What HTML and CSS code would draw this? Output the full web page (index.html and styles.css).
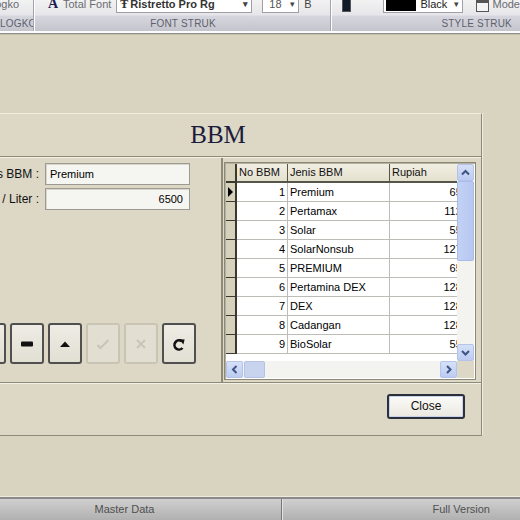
FILE: index.html
```html
<!DOCTYPE html>
<html>
<head>
<meta charset="utf-8">
<link rel="stylesheet" href="styles.css">
</head>
<body>
<div class="screen">
  <div class="ribbon">
    <div class="rgroup g1">
      <div class="rrow"><span class="rtxt">Cetak Logko</span></div>
      <div class="rlabel">LOGKO</div>
    </div>
    <div class="rgroup g2">
      <div class="rrow">
        <span class="ico-a">A</span><span class="rtxt">Total Font</span>
        <span class="combo cfont"><span class="tt">Ŧ</span>Ristretto Pro Rg<span class="carr">▾</span></span>
        <span class="combo csize">18<span class="carr">▾</span></span>
        <span class="rtxt rb">B</span>
      </div>
      <div class="rlabel">FONT STRUK</div>
    </div>
    <div class="rgroup g3">
      <div class="rrow">
        <span class="ico-color"></span>
        <span class="combo ccolor"><span class="swatch"></span>Black<span class="carr">▾</span></span>
        <span class="ico-mode"></span><span class="rtxt">Mode</span>
      </div>
      <div class="rlabel rlabel-right">STYLE STRUK</div>
    </div>
  </div>

  <div class="desk">
    <div class="window">
      <div class="wtitle">BBM</div>
      <div class="wbody">
        <div class="left">
          <div class="field"><span class="lbl">Jenis BBM :</span><div class="input">Premium</div></div>
          <div class="field"><span class="lbl">Harga / Liter :</span><div class="input num">6500</div></div>
          <div class="btns">
            <div class="nbtn"><svg width="12" height="12" viewBox="0 0 12 12"><rect x="1" y="4" width="10" height="4" fill="#111"/><rect x="4" y="1" width="4" height="10" fill="#111"/></svg></div>
            <div class="nbtn"><svg width="14" height="8" viewBox="0 0 14 8"><rect x="1" y="1.5" width="12" height="5" rx="1" fill="#111"/></svg></div>
            <div class="nbtn"><svg width="12" height="8" viewBox="0 0 12 8"><polygon points="1,7 6,1.5 11,7" fill="#111"/></svg></div>
            <div class="nbtn off"><svg width="14" height="12" viewBox="0 0 14 12"><polyline points="1.5,7 4.5,10 12.5,2" fill="none" stroke="#c9c5b5" stroke-width="2"/></svg></div>
            <div class="nbtn off"><svg width="12" height="12" viewBox="0 0 12 12"><path d="M2 2 L10 10 M10 2 L2 10" stroke="#c9c5b5" stroke-width="2"/></svg></div>
            <div class="nbtn"><svg width="14" height="14" viewBox="0 0 14 14"><path d="M10.5 11 A4.6 4.6 0 1 1 9.8 4.2" fill="none" stroke="#111" stroke-width="2.6"/><polygon points="7.2,2.2 12.6,2.4 11.4,7.4" fill="#111"/></svg></div>
          </div>
        </div>
        <div class="grid">
          <div class="gmain">
            <div class="gview">
              <div class="gtable">
                <div class="hc ind"></div><div class="hc">No BBM</div><div class="hc">Jenis BBM</div><div class="hc">Rupiah</div>

                <div class="c ind"><span class="arrow"></span></div><div class="c r">1</div><div class="c">Premium</div><div class="c r">6500</div>
                <div class="c ind"></div><div class="c r">2</div><div class="c">Pertamax</div><div class="c r">11200</div>
                <div class="c ind"></div><div class="c r">3</div><div class="c">Solar</div><div class="c r">5500</div>
                <div class="c ind"></div><div class="c r">4</div><div class="c">SolarNonsub</div><div class="c r">12700</div>
                <div class="c ind"></div><div class="c r">5</div><div class="c">PREMIUM</div><div class="c r">6500</div>
                <div class="c ind"></div><div class="c r">6</div><div class="c">Pertamina DEX</div><div class="c r">12800</div>
                <div class="c ind"></div><div class="c r">7</div><div class="c">DEX</div><div class="c r">12800</div>
                <div class="c ind"></div><div class="c r">8</div><div class="c">Cadangan</div><div class="c r">12800</div>
                <div class="c ind"></div><div class="c r">9</div><div class="c">BioSolar</div><div class="c r">5500</div>
              </div>
            </div>
            <div class="vscroll">
              <div class="sbtn"><svg width="15" height="15" viewBox="0 0 15 15"><polyline points="4,9.5 7.5,6 11,9.5" fill="none" stroke="#3d5584" stroke-width="2"/></svg></div>
              <div class="vthumb"></div>
              <div class="vtrack"></div>
              <div class="sbtn"><svg width="15" height="15" viewBox="0 0 15 15"><polyline points="4,6 7.5,9.5 11,6" fill="none" stroke="#3d5584" stroke-width="2"/></svg></div>
            </div>
          </div>
          <div class="hscroll">
            <div class="sbtn"><svg width="15" height="15" viewBox="0 0 15 15"><polyline points="9.5,4 6,7.5 9.5,11" fill="none" stroke="#3d5584" stroke-width="2"/></svg></div>
            <div class="hthumb"></div>
            <div class="htrack"></div>
            <div class="sbtn"><svg width="15" height="15" viewBox="0 0 15 15"><polyline points="6,4 9.5,7.5 6,11" fill="none" stroke="#3d5584" stroke-width="2"/></svg></div>
            <div class="corner"></div>
          </div>
        </div>
      </div>
      <div class="wfoot">
        <div class="closebtn">Close</div>
      </div>
    </div>
  </div>

  <div class="status">
    <div class="st st1">Master Data</div>
    <div class="st st2">Full Version</div>
  </div>
</div>
</body>
</html>
```

FILE: styles.css
```css
* { box-sizing: border-box; }
html, body { margin: 0; padding: 0; }
body {
  width: 520px;
  height: 520px;
  overflow: hidden;
  font-family: "Liberation Sans", Arial, sans-serif;
  font-size: 11px;
  color: #000;
  background: #d9d4bf;
}
.screen { display: flex; flex-direction: column; height: 520px; }

/* ribbon */
.ribbon {
  flex: none;
  height: 33px;
  display: flex;
  background: linear-gradient(#f2f2f2 0, #e6e6ea 48%, #d6d6de 52%, #c4c4cc 100%);
  border-bottom: 2px solid #fbfbfb;
  overflow: hidden;
}
.rgroup {
  display: flex;
  flex-direction: column;
  justify-content: space-between;
  padding-bottom: 1px;
  border-right: 1px solid #a4a4ac;
  box-shadow: 1px 0 0 #fdfdfd;
  margin-right: 2px;
  overflow: hidden;
}
.g1 { width: 34px; }
.g2 { width: 295px; }
.g3 { flex: 1; border-right: none; box-shadow: none; margin-right: 0; }
.rrow {
  height: 18px;
  margin-top: -5px;
  display: flex;
  align-items: center;
  white-space: nowrap;
}
.g1 .rrow { justify-content: flex-end; padding-right: 14px; }
.g2 .rrow { padding-left: 12px; }
.g3 .rrow { padding-left: 9px; }
.rtxt { color: #6b6b70; font-size: 11px; }
.rlabel {
  height: 13px;
  line-height: 13px;
  font-size: 10px;
  color: #5f5f6e;
  text-align: center;
  letter-spacing: 0.2px;
  white-space: nowrap;
}
.g1 .rlabel { text-align: right; padding-right: 12px; }
.rlabel-right { text-align: right; padding-right: 8px; }
.ico-a { font-family: "Liberation Serif", serif; font-weight: bold; font-size: 14px; color: #1c1c50; width: 12px; margin-right: 3px; }
.combo {
  display: flex;
  align-items: center;
  height: 18px;
  background: #fff;
  border: 1px solid #a0a0a6;
  position: relative;
  padding-left: 3px;
  color: #222;
}
.carr { position: absolute; right: 3px; top: 3px; font-size: 9px; color: #444; }
.cfont { margin-left: 5px; width: 136px; font-weight: bold; color: #333; }
.tt { font-family: "Liberation Serif", serif; font-size: 12px; margin-right: 2px; }
.csize { margin-left: 10px; width: 37px; padding-left: 6px; color: #555; }
.rb { margin-left: 5px; color: #444; }
.ico-color { width: 10px; height: 14px; background: #111a2a; border: 1px solid #555; margin-top: 2px; }
.ccolor { margin-left: 32px; width: 86px; padding-left: 2px; }
.swatch { width: 30px; height: 14px; background: #000; margin-right: 4px; }
.ico-mode { width: 14px; height: 12px; border: 1px solid #555; border-top-width: 3px; background: #f4f4f4; margin-left: 13px; margin-top: 3px; margin-right: 3px; }

/* desktop */
.desk {
  flex: 1;
  overflow: hidden;
  border-top: 1px solid #8f8f8f;
  box-shadow: inset 0 1px 0 #c4bea8;
  background: #d9d4bf;
}
.window {
  margin-top: 79px;
  margin-left: -45px;
  width: 527px;
  height: 322px;
  background: #dcd8c5;
  border-top: 1px solid #f1eee2;
  border-right: 1px solid #8e8a79;
  box-shadow: 1px 0 0 #eeebdf, 0 1px 0 #8e8a79;
  display: flex;
  flex-direction: column;
}
.wtitle {
  height: 43px;
  line-height: 42px;
  text-align: center;
  font-family: "Liberation Serif", "Times New Roman", serif;
  font-size: 25px;
  color: #1c1c3e;
  border-bottom: 1px solid #8e8a78;
  box-shadow: 0 1px 0 #f3f0e5;
}
.wbody {
  height: 225px;
  display: flex;
  border-bottom: 1px solid #8e8a78;
  box-shadow: 0 1px 0 #f3f0e5;
  margin-top: 1px;
}
.left {
  width: 268px;
  border-right: 2px solid #8e8a78;
  padding-top: 5px;
}
.field { display: flex; align-items: center; height: 22px; margin-bottom: 3px; }
.lbl { width: 87px; text-align: right; padding-right: 3px; font-size: 12px; color: #111; white-space: nowrap; }
.input {
  margin-left: 3px;
  width: 145px;
  height: 22px;
  line-height: 20px;
  padding: 0 4px;
  border: 1px solid #9c9a92;
  box-shadow: inset 1px 1px 0 #d8d6cc;
  background: #f5f5f1;
  font-size: 11px;
}
.input.num { text-align: right; padding-right: 6px; }
.btns { display: flex; gap: 4px; margin-top: 113px; padding-left: 17px; }
.nbtn {
  width: 34px;
  height: 41px;
  border: 2px solid #505050;
  border-radius: 3px;
  background: linear-gradient(#eeece4, #e2dfd3);
  display: flex;
  align-items: center;
  justify-content: center;
}
.nbtn.off { border-color: #c9c5b4; background: #e2dfd2; }

/* grid */
.grid {
  margin: 4px 0 0 1px;
  width: 252px;
  height: 218px;
  border: 1px solid #8c8877;
  box-shadow: inset 1px 1px 0 #b5b1a0;
  background: #fff;
  padding: 1px;
  display: flex;
  flex-direction: column;
}
.gmain { display: flex; flex: 1; min-height: 0; }
.gview { width: 231px; overflow: hidden; background: #fff; }
.gtable {
  display: grid;
  grid-template-columns: 11px 51px 102px 87px;
  grid-auto-rows: 19px;
  width: 251px;
}
.hc {
  background: linear-gradient(#f1eee2, #e5e1cf);
  border-right: 1px solid #57544a;
  border-bottom: 2px solid #57544a;
  padding-left: 2px;
  line-height: 17px;
  white-space: nowrap;
  color: #111;
}
.c {
  border-right: 1px solid #bdbdb8;
  border-bottom: 1px solid #bdbdb8;
  line-height: 18px;
  padding: 0 2px;
  white-space: nowrap;
  overflow: hidden;
}
.c.r { text-align: right; }
.ind { background: #d6d1ba; border-right: 2px solid #3b392f; border-bottom: 1px solid #3b392f; padding: 0; display: flex; align-items: center; justify-content: center; }
.hc.ind { border-bottom: 2px solid #3b392f; }
.arrow { width: 0; height: 0; border-left: 5px solid #000; border-top: 5px solid transparent; border-bottom: 5px solid transparent; }

.vscroll { width: 17px; display: flex; flex-direction: column; background: #f3f3ef; }
.sbtn {
  width: 17px;
  height: 17px;
  flex: none;
  background: linear-gradient(#d6e0f8, #bccbf1);
  border: 1px solid #b3c3ea;
  border-radius: 2px;
  display: flex;
  align-items: center;
  justify-content: center;
}
.vthumb { height: 80px; flex: none; background: linear-gradient(90deg, #c3d1f5, #b6c7f1); border: 1px solid #a9bbe9; border-radius: 2px; }
.vtrack { flex: 1; }
.hscroll { height: 17px; display: flex; background: #f3f3ef; flex: none; }
.hthumb { width: 21px; background: #c8d3ee; border: 1px solid #b3c2e6; border-radius: 2px; margin-left: 1px; }
.htrack { flex: 1; }
.corner { width: 17px; background: #dcd8c5; }

.wfoot { flex: 1; display: flex; justify-content: flex-end; padding-top: 11px; padding-right: 16px; }
.closebtn {
  width: 78px;
  height: 25px;
  border: 2px solid #2c303a;
  border-radius: 3px;
  background: linear-gradient(#fbfbf9, #eae8e0);
  box-shadow: inset 0 0 0 1px #c9d2ea;
  text-align: center;
  line-height: 21px;
  font-size: 12px;
  color: #111;
}

/* status bar */
.status {
  flex: none;
  height: 23px;
  display: flex;
  border-top: 2px solid #8a8a8a;
  box-shadow: 0 -1px 0 #eeeade;
  background: linear-gradient(#d0d0d0, #b0b0b0);
  color: #505050;
  font-size: 11px;
  line-height: 20px;
}
.st1 { width: 282px; text-align: center; padding-right: 32px; border-right: 1px solid #777; box-shadow: 1px 0 0 #e4e4e4; }
.st2 { flex: 1; text-align: right; padding-right: 30px; }
```
